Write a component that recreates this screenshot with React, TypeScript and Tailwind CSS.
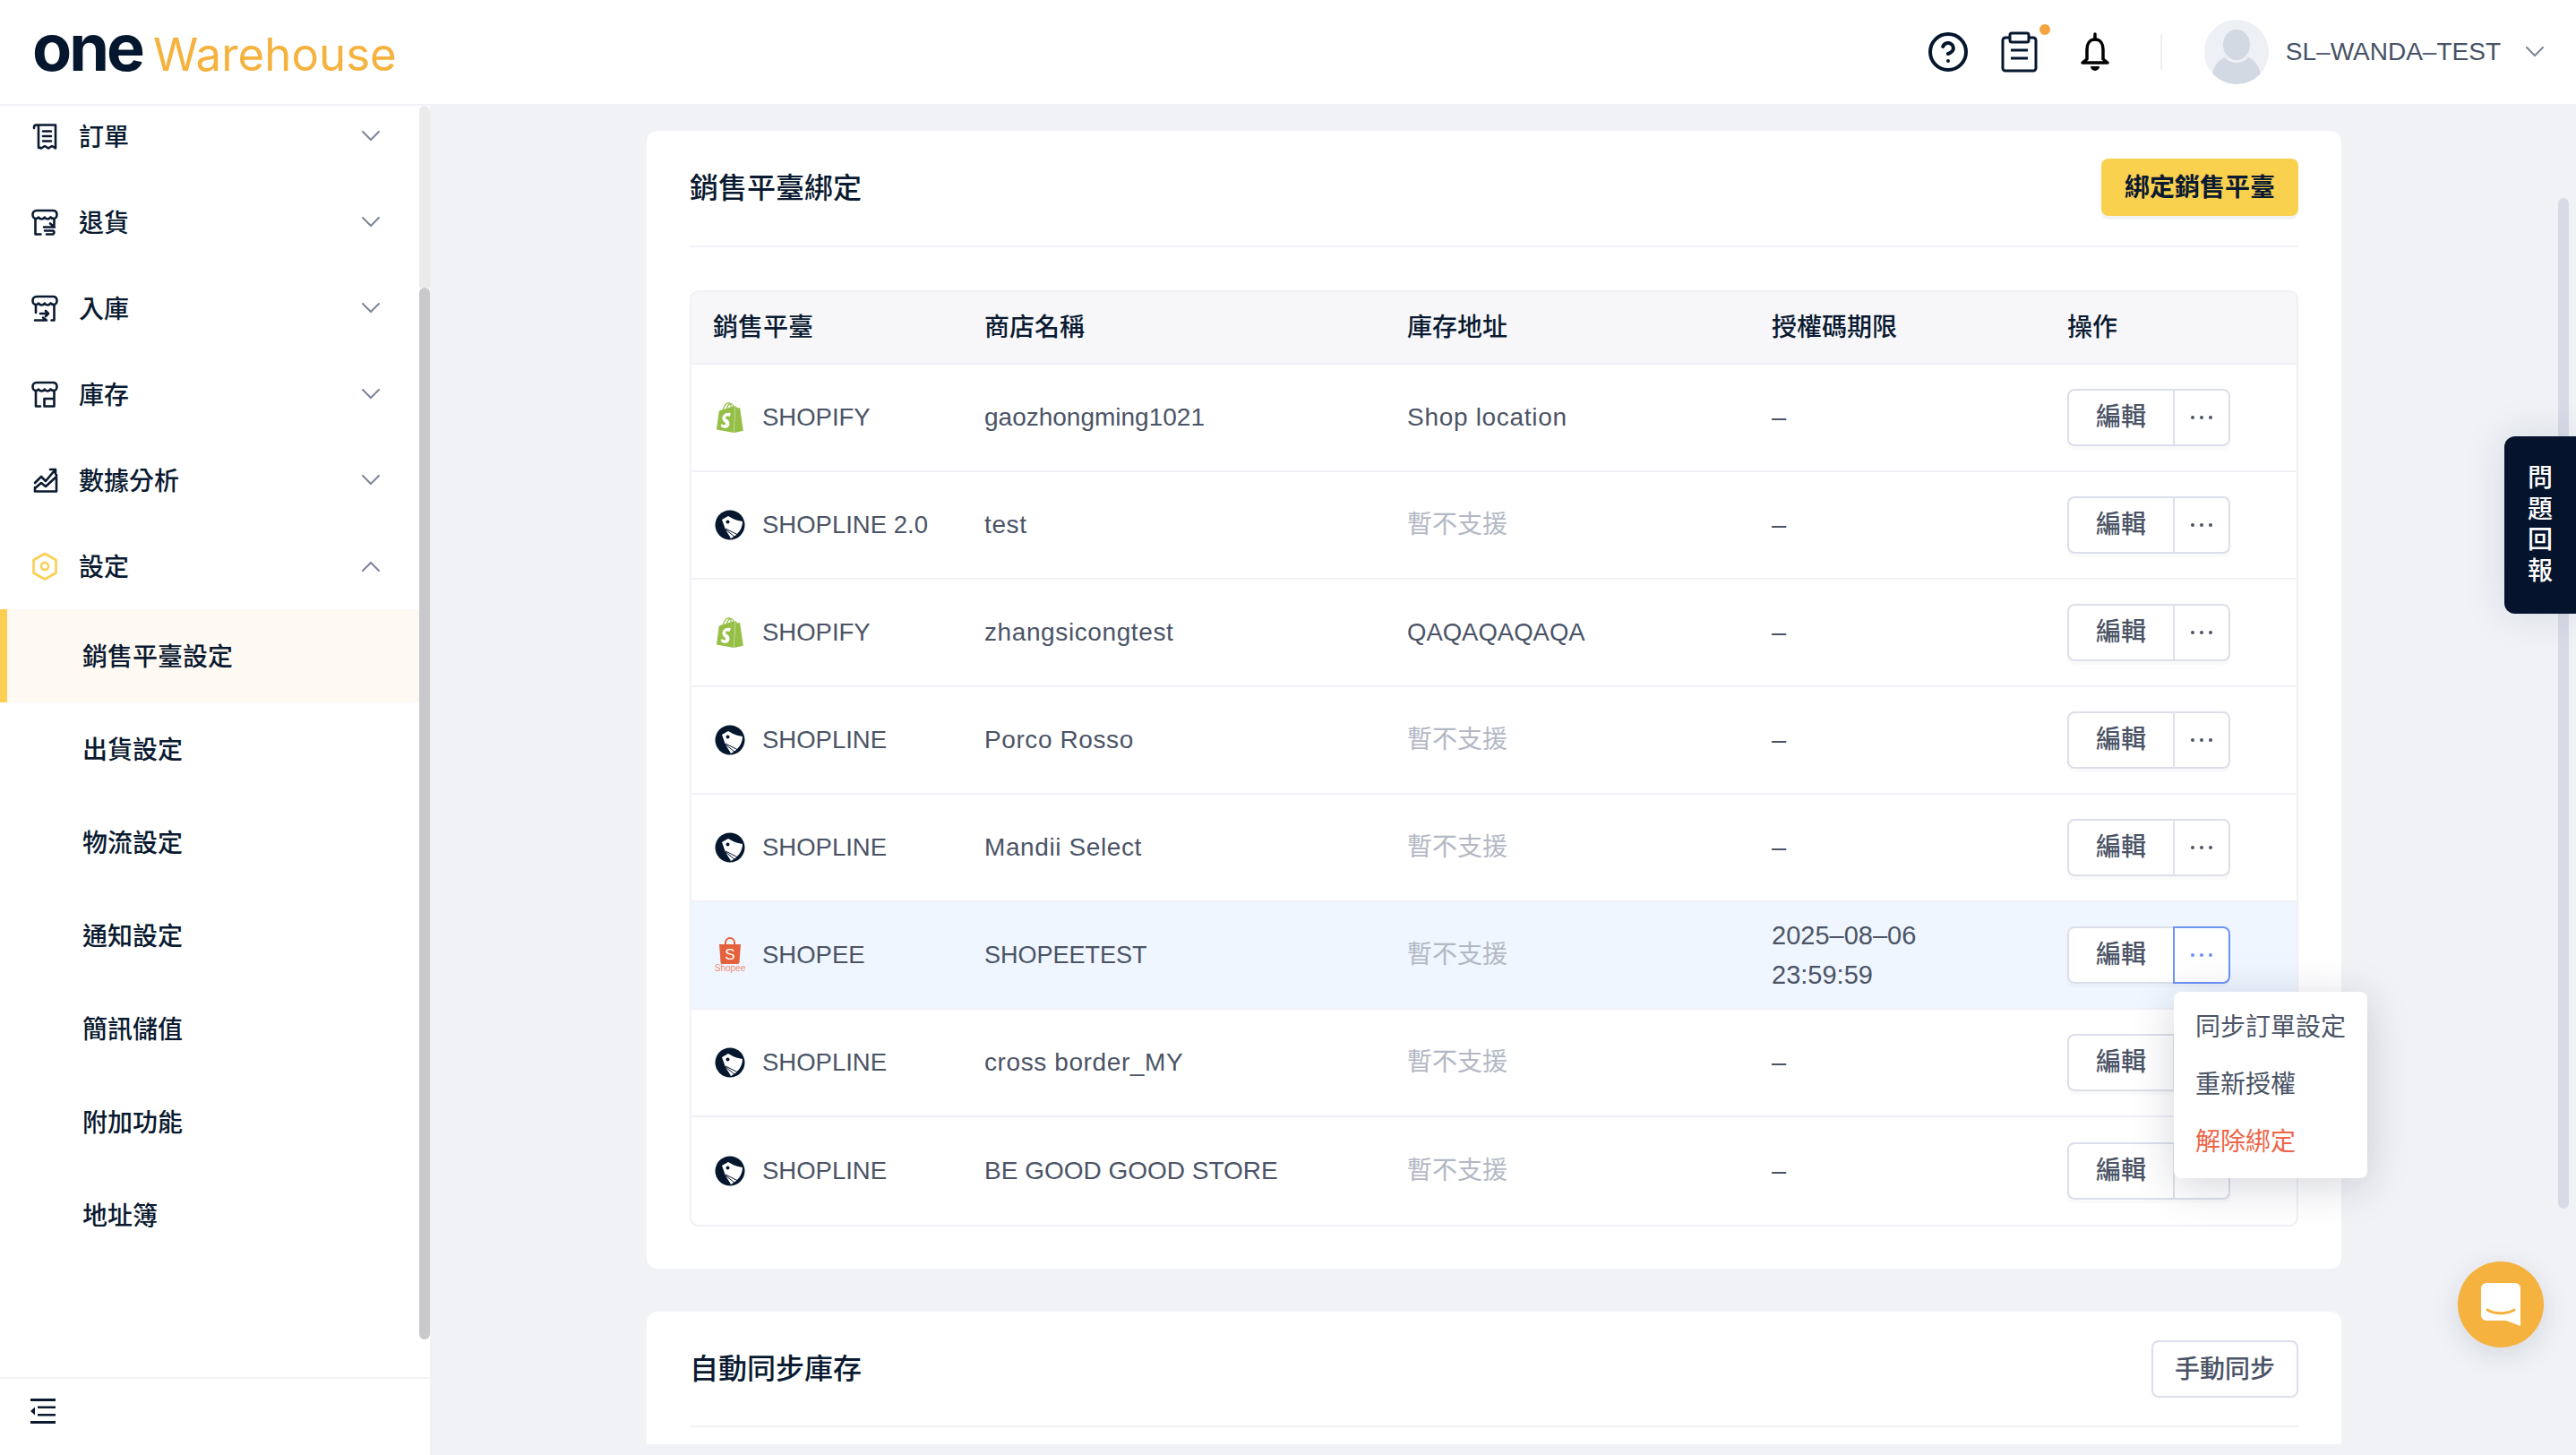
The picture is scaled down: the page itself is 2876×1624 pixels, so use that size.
import { SiShopify } from "react-icons/si";
import { CircleHelp } from "lucide-react";

const DARK = "#0a1a30";

function Chevron({ up = false, className = "" }: { up?: boolean; className?: string }) {
  return (
    <svg width="20" height="12" viewBox="0 0 20 12" fill="none" className={className}>
      <path
        d={up ? "M1 11 10 2l9 9" : "M1 1l9 9 9-9"}
        stroke="#7d8699"
        strokeWidth="2"
        strokeLinecap="round"
      />
    </svg>
  );
}

const awning =
  "M7 3h18c3 0 4.500 2 4.500 4.500 0 2.500-1.500 4.500-3.500 4.500s-3.500-1.500-3.500-1.500S21 12.500 19 12.500 16 10.500 16 10.500 14.500 12.500 12.500 12.500 9 10.500 9 10.500 8 12 6 12 2.500 10 2.500 7.500C2.500 5 4 3 7 3z";

function NavIcon({ name }: { name: string }) {
  const common = {
    width: 32,
    height: 32,
    viewBox: "0 0 32 32",
    fill: "none",
    stroke: DARK,
    strokeWidth: 2.6,
    strokeLinecap: "round" as const,
    strokeLinejoin: "round" as const,
  };
  if (name === "order")
    return (
      <svg {...common}>
        <path d="M4 7V6a2.500 2.500 0 0 1 5 0v23M6 3.500h22v26l-4-2.500-4 2.500-4-2.500-4 2.500-3-1.500" />
        <path d="M14 10.500h9M14 16h9M14 21.500h9" />
      </svg>
    );
  if (name === "return")
    return (
      <svg {...common}>
        <path d={awning} />
        <path d="M5.500 13v16.500h6M26.500 13v6M15 21.500h12l-5-4M16 25.500h9c2 0 2 4-1 4h-6" />
      </svg>
    );
  if (name === "inbound")
    return (
      <svg {...common}>
        <path d={awning} />
        <path d="M6 13v8M26.500 13v16.500h-3M5 29.500h13l-4-3M17 19l3 3-3 3M11 22h9" />
      </svg>
    );
  if (name === "stock")
    return (
      <svg {...common}>
        <path d={awning} />
        <path d="M6 13v16.500h5M26.500 13v16.500H15.500v-8.500h11" />
      </svg>
    );
  if (name === "chart")
    return (
      <svg {...common}>
        <path d="M5 24v4.500h24V10M5 19l7-7 5 5L27 5M22 4h6v5M5 25l7-6 5 4 12-11" />
      </svg>
    );
  return (
    <svg {...common} stroke="#fbcf52">
      <path d="M16 2 28.500 9v14.500L16 30.500 3.500 23.500V9z" />
      <circle cx="16" cy="16" r="4" />
    </svg>
  );
}

const mainNav = [
  { label: "訂單", icon: "order" },
  { label: "退貨", icon: "return" },
  { label: "入庫", icon: "inbound" },
  { label: "庫存", icon: "stock" },
  { label: "數據分析", icon: "chart" },
  { label: "設定", icon: "settings", open: true },
];

const subNav = ["銷售平臺設定", "出貨設定", "物流設定", "通知設定", "簡訊儲值", "附加功能", "地址簿"];

const lower = "w-[472px] text-[28px] tracking-[0.6px]";
const upper = "w-[472px] text-[28px]";

const rows = [
  { platform: "SHOPIFY", store: "gaozhongming1021", storeClass: upper, address: "Shop location", expiry: "–" },
  { platform: "SHOPLINE 2.0", store: "test", storeClass: lower, address: "", expiry: "–" },
  { platform: "SHOPIFY", store: "zhangsicongtest", storeClass: lower, address: "QAQAQAQAQA", expiry: "–" },
  { platform: "SHOPLINE", store: "Porco Rosso", storeClass: lower, address: "", expiry: "–" },
  { platform: "SHOPLINE", store: "Mandii Select", storeClass: lower, address: "", expiry: "–" },
  {
    platform: "SHOPEE",
    store: "SHOPEETEST",
    storeClass: "w-[472px] text-[27px]",
    address: "",
    expiry: "2025–08–06 23:59:59",
    active: true,
  },
  { platform: "SHOPLINE", store: "cross border_MY", storeClass: lower, address: "", expiry: "–" },
  { platform: "SHOPLINE", store: "BE GOOD GOOD STORE", storeClass: upper, address: "", expiry: "–" },
];

function PlatformIcon({ platform }: { platform: string }) {
  if (platform === "SHOPIFY") return <SiShopify size={34} color="#95bf47" />;
  if (platform === "SHOPEE")
    return (
      <div className="flex w-[34px] flex-col items-center">
        <svg width="26" height="30" viewBox="0 0 26 30">
          <path d="M8 9V6a5 5 0 0 1 10 0v3" fill="none" stroke="#e5603c" strokeWidth="2" />
          <path d="M1 8h24l-1.500 20a2 2 0 0 1-2 2h-17a2 2 0 0 1-2-2z" fill="#e5603c" />
          <text x="13" y="25" textAnchor="middle" fontSize="17" fill="#ffffff" fontFamily="Liberation Sans">
            S
          </text>
        </svg>
        <span className="text-[10px] leading-[10px] text-[#ee8a70]">Shopee</span>
      </div>
    );
  return (
    <svg width="34" height="34" viewBox="0 0 34 34">
      <circle cx="17" cy="17" r="16.500" fill="#05172e" />
      <path d="M8 11 15 7c5 3 9 5 16 6 0 8-5 15-13 19l-5-7z" fill="#ffffff" />
      <circle cx="14.500" cy="13.500" r="2" fill="#05172e" />
      <path d="M12 21l14 7M12 22l10 8M12 23l5 8" stroke="#05172e" strokeWidth="1" />
    </svg>
  );
}

function ActionGroup({ active }: { active?: boolean }) {
  return (
    <div className="relative flex h-[64px] w-[182px] rounded-[8px] bg-white shadow-[0_4px_0_rgba(0,0,0,0.02)]">
      <div className="flex w-[120px] items-center justify-center rounded-l-[8px] border-2 border-[#dcdfea] text-[28px] font-medium text-[#4b5466]">
        編輯
      </div>
      <div
        className={
          active
            ? "-ml-[2px] flex w-[64px] items-center justify-center gap-[6px] rounded-r-[8px] border-2 border-[#6b93f5]"
            : "-ml-[2px] flex w-[64px] items-center justify-center gap-[6px] rounded-r-[8px] border-2 border-[#dcdfea]"
        }
      >
        <span className={active ? "size-[4px] rounded-full bg-[#6b93f5]" : "size-[4px] rounded-full bg-[#4b5466]"} />
        <span className={active ? "size-[4px] rounded-full bg-[#6b93f5]" : "size-[4px] rounded-full bg-[#4b5466]"} />
        <span className={active ? "size-[4px] rounded-full bg-[#6b93f5]" : "size-[4px] rounded-full bg-[#4b5466]"} />
      </div>
      {active && (
        <div className="absolute top-[73px] left-[119px] z-20 flex h-[208px] w-[216px] flex-col justify-center rounded-[8px] bg-white pl-[24px] shadow-[0_8px_48px_rgba(20,30,60,0.18)]">
          <div className="flex h-[64px] items-center text-[28px] text-[#4b5466]">同步訂單設定</div>
          <div className="flex h-[64px] items-center text-[28px] text-[#4b5466]">重新授權</div>
          <div className="flex h-[64px] items-center text-[28px] text-[#ee6548]">解除綁定</div>
        </div>
      )}
    </div>
  );
}

export default function App() {
  return (
    <div className="flex h-[1624px] w-[2876px] flex-col overflow-hidden bg-[#f0f2f6] font-['Liberation_Sans','Noto_Sans_CJK_TC',sans-serif]">
      {/* top bar */}
      <header className="flex h-[118px] shrink-0 items-center border-b-2 border-[#f0f2f6] bg-white pr-[34px] pl-[36px]">
        <div className="-mt-[3px] flex items-baseline">
          <span className="font-['Inter',sans-serif] text-[72px] leading-[72px] font-bold tracking-[-3px] text-[#05172e]">
            one
          </span>
          <span className="ml-[12px] font-['Inter',sans-serif] text-[51px] leading-[72px] text-[#f5b23e]">
            Warehouse
          </span>
        </div>
        <div className="ml-auto flex items-center">
          <CircleHelp size={48} strokeWidth={2} color="#05172e" />
          <div className="relative ml-[34px]">
            <svg width="44" height="46" viewBox="0 0 44 46" fill="none" stroke="#05172e" strokeWidth="3">
              <rect x="3" y="7" width="37" height="37" rx="3" />
              <rect x="11" y="2" width="21" height="10" rx="2" fill="#ffffff" />
              <path d="M12 21h19M12 30h19" />
            </svg>
            <span className="absolute -top-[8px] -right-[12px] size-[12px] rounded-full bg-[#f5a33e]" />
          </div>
          <svg width="40" height="44" viewBox="0 0 40 44" className="ml-[42px]">
            <path
              d="M20 8c-6 0-9 5-9 11v11l-5 4h28l-5-4V19c0-6-3-11-9-11z"
              fill="none"
              stroke="#000000"
              strokeWidth="3.500"
              strokeLinejoin="round"
            />
            <path d="M20 2v6" stroke="#000000" strokeWidth="3.500" strokeLinecap="round" />
            <path d="M15 38a5 5 0 0 0 10 0z" fill="#000000" />
          </svg>
          <div className="mr-[47px] ml-[53px] h-[40px] w-[2px] bg-[#eef0f4]" />
          <svg width="72" height="72" viewBox="0 0 72 72">
            <clipPath id="avatar-clip">
              <circle cx="36" cy="36" r="36" />
            </clipPath>
            <g clipPath="url(#avatar-clip)">
              <rect width="72" height="72" fill="#edf0f5" />
              <ellipse cx="36" cy="28" rx="15" ry="17" fill="#d2d9e3" />
              <path d="M8 72c0-16 5-26 15-30 3 4 8 6 13 6s10-2 13-6c10 4 15 14 15 30z" fill="#d2d9e3" />
            </g>
          </svg>
          <span className="ml-[19px] text-[28px] text-[#475266]">SL–WANDA–TEST</span>
          <Chevron className="ml-[26px] w-[24px]" />
        </div>
      </header>

      <div className="relative flex min-h-0 flex-1">
        {/* sidebar */}
        <aside className="flex w-[480px] shrink-0 flex-col bg-white">
          <div className="flex min-h-0 flex-1">
            <nav className="min-w-0 flex-1 overflow-hidden">
              <div className="-mt-[14px]">
                {mainNav.map((item) => (
                  <div key={item.label} className="flex h-[96px] items-center pr-[44px] pl-[34px]">
                    <NavIcon name={item.icon} />
                    <span className="ml-[22px] pt-[3px] text-[28px] font-medium text-[#0a1a30]">{item.label}</span>
                    <Chevron up={item.open} className="ml-auto" />
                  </div>
                ))}
                {subNav.map((label, i) => (
                  <div
                    key={label}
                    className={
                      i === 0
                        ? "flex h-[104px] items-center border-l-8 border-[#fbcf52] bg-[#fff9f3] pt-[3px] pl-[84px] text-[28px] font-medium text-[#0a1a30]"
                        : "flex h-[104px] items-center pt-[3px] pl-[92px] text-[28px] font-medium text-[#0a1a30]"
                    }
                  >
                    {label}
                  </div>
                ))}
              </div>
            </nav>
            <div className="flex w-[12px] shrink-0 flex-col pb-[42px]">
              <div className="h-[203px] rounded-t-[6px] bg-[#ebebeb]" />
              <div className="flex-1 rounded-[6px] bg-[#c9c9cb]" />
            </div>
          </div>
          <div className="flex h-[87px] shrink-0 items-center border-t-2 border-[#f0f2f6] pb-[14px] pl-[34px]">
            <svg width="28" height="28" viewBox="0 0 28 28" fill={DARK}>
              <path d="M0 0h28v3H0zM8 8.500h20v2.500H8zM8 17h20v2.500H8zM0 25h28v3H0zM5 9.500v9l-5-4.500z" />
            </svg>
          </div>
        </aside>

        {/* content */}
        <main className="min-w-0 flex-1 overflow-hidden pt-[28px] pl-[242px]">
          <section className="h-[1270px] w-[1892px] rounded-[12px] bg-white px-[48px]">
            <div className="flex h-[130px] items-center border-b-2 border-[#f0f2f6] pb-[2px]">
              <h2 className="pt-[2px] text-[32px] font-medium text-[#0a1a30]">銷售平臺綁定</h2>
              <button className="ml-auto flex h-[64px] w-[220px] items-center justify-center rounded-[8px] bg-[#fad04f] pt-[2px] text-[28px] font-bold text-[#0a1a30] shadow-[0_4px_0_#f2f4f4]">
                綁定銷售平臺
              </button>
            </div>
            <div className="mt-[48px] rounded-[10px] border-2 border-[#f0f0f6]">
              <div className="flex h-[81px] items-center rounded-t-[8px] border-b-2 border-[#f0f0f6] bg-[#f7f7fa] px-[24px] text-[28px] font-medium text-[#0a1a30]">
                <div className="w-[303px]">銷售平臺</div>
                <div className="w-[472px]">商店名稱</div>
                <div className="w-[407px]">庫存地址</div>
                <div className="w-[330px]">授權碼期限</div>
                <div>操作</div>
              </div>
              {rows.map((row, i) => (
                <div
                  key={i}
                  className={
                    (i < rows.length - 1 ? "border-b-2 border-[#f0f0f6] " : "") +
                    (row.active
                      ? "flex h-[120px] items-center bg-[#eff6ff] px-[24px] text-[#4b5466]"
                      : "flex h-[120px] items-center px-[24px] text-[#4b5466]")
                  }
                >
                  <div className="flex w-[303px] items-center pl-[2px]">
                    <PlatformIcon platform={row.platform} />
                    <span className="ml-[19px] text-[27.5px]">{row.platform}</span>
                  </div>
                  <div className={row.storeClass}>{row.store}</div>
                  <div className="w-[407px]">
                    {row.address === "Shop location" ? (
                      <span className="text-[28px] tracking-[0.7px]">{row.address}</span>
                    ) : row.address ? (
                      <span className="text-[27.5px]">{row.address}</span>
                    ) : (
                      <span className="text-[28px] text-[#b3b8c4]">暫不支援</span>
                    )}
                  </div>
                  <div className="w-[330px] pr-[120px] text-[29px] leading-[44px]">{row.expiry}</div>
                  <ActionGroup active={row.active} />
                </div>
              ))}
            </div>
          </section>

          <section className="mt-[48px] h-[148px] w-[1892px] rounded-t-[12px] bg-white px-[48px]">
            <div className="flex h-[129px] items-center border-b-2 border-[#f0f2f6]">
              <h2 className="text-[32px] font-medium text-[#0a1a30]">自動同步庫存</h2>
              <button className="ml-auto flex h-[64px] w-[164px] items-center justify-center rounded-[8px] border-2 border-[#dcdfea] pt-[2px] text-[28px] font-medium text-[#4b5466]">
                手動同步
              </button>
            </div>
          </section>
        </main>

        {/* page scrollbar */}
        <div className="absolute top-[103px] right-[8px] h-[1128px] w-[12px] rounded-[6px] bg-[#d8dbe6]" />

        {/* feedback tab */}
        <div className="absolute top-[369px] right-0 flex h-[198px] w-[80px] flex-col items-center justify-center rounded-l-[12px] bg-[#05132d] text-[28px] leading-[34.500px] font-medium text-white shadow-[0_0_48px_rgba(20,30,60,0.12)]">
          <span>問</span>
          <span>題</span>
          <span>回</span>
          <span>報</span>
        </div>

        {/* chat bubble */}
        <div className="absolute top-[1290px] right-[36px] flex size-[96px] items-center justify-center rounded-full bg-[#f5b23e] shadow-[0_8px_32px_rgba(20,30,60,0.12)]">
          <svg width="44" height="48" viewBox="0 0 44 48">
            <path d="M6 0h32a6 6 0 0 1 6 6v42l-16-6H6a6 6 0 0 1-6-6V6a6 6 0 0 1 6-6z" fill="#ffffff" />
            <path d="M7 30c8 5 22 5 30 0" fill="none" stroke="#f5b23e" strokeWidth="3" strokeLinecap="round" />
          </svg>
        </div>
      </div>
    </div>
  );
}
